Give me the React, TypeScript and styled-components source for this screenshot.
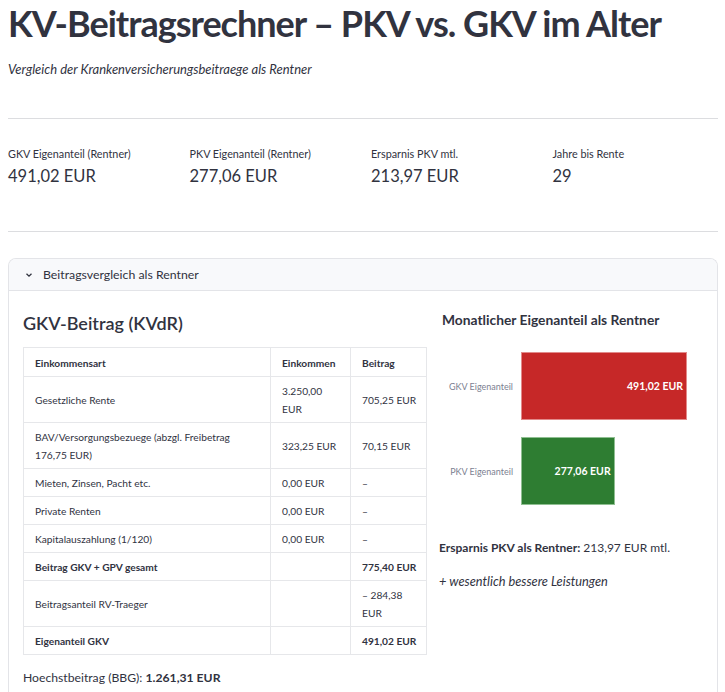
import styled, { createGlobalStyle } from 'styled-components';

const FONT = `"Lato", "Noto Sans", sans-serif`;

const GlobalStyle = createGlobalStyle`
	body {
		margin: 0;
		background: #ffffff;
		color: #31333f;
		font-family: ${FONT};
	}
`;

const metrics = [
	{ label: 'GKV Eigenanteil (Rentner)', value: '491,02 EUR' },
	{ label: 'PKV Eigenanteil (Rentner)', value: '277,06 EUR' },
	{ label: 'Ersparnis PKV mtl.', value: '213,97 EUR' },
	{ label: 'Jahre bis Rente', value: '29' },
];

type Row = { art: string; einkommen: string; beitrag: string; bold?: boolean; wrap?: boolean };

const rows: Row[] = [
	{ art: 'Gesetzliche Rente', einkommen: '3.250,00 EUR', beitrag: '705,25 EUR' },
	{ art: 'BAV/Versorgungsbezuege (abzgl. Freibetrag 176,75 EUR)', einkommen: '323,25 EUR', beitrag: '70,15 EUR' },
	{ art: 'Mieten, Zinsen, Pacht etc.', einkommen: '0,00 EUR', beitrag: '–' },
	{ art: 'Private Renten', einkommen: '0,00 EUR', beitrag: '–' },
	{ art: 'Kapitalauszahlung (1/120)', einkommen: '0,00 EUR', beitrag: '–' },
	{ art: 'Beitrag GKV + GPV gesamt', einkommen: '', beitrag: '775,40 EUR', bold: true },
	{ art: 'Beitragsanteil RV-Traeger', einkommen: '', beitrag: '– 284,38 EUR', wrap: true },
	{ art: 'Eigenanteil GKV', einkommen: '', beitrag: '491,02 EUR', bold: true },
];

const bars = [
	{ label: 'GKV Eigenanteil', value: 491.02, text: '491,02 EUR', color: '#c62828', stroke: '#e28a8a' },
	{ label: 'PKV Eigenanteil', value: 277.06, text: '277,06 EUR', color: '#2e7d32', stroke: '#8fbf91' },
];

const BAR_MAX = 166;

const App = () => {
	return (
		<Page>
			<GlobalStyle />
			<Title>KV-Beitragsrechner – PKV vs. GKV im Alter</Title>
			<Subtitle>Vergleich der Krankenversicherungsbeitraege als Rentner</Subtitle>
			<Divider />
			<Metrics>
				{metrics.map((m) => (
					<Metric key={m.label}>
						<p className="label">{m.label}</p>
						<p className="value">{m.value}</p>
					</Metric>
				))}
			</Metrics>
			<Divider />
			<Expander>
				<ExpanderHeader>
					<svg width="10" height="10" viewBox="0 0 10 10">
						<path d="M2.5 3.8 L5 6.2 L7.5 3.8" fill="none" stroke="#31333f" strokeWidth="1.3" />
					</svg>
					<span>Beitragsvergleich als Rentner</span>
				</ExpanderHeader>
				<ExpanderBody>
					<LeftCol>
						<SectionTitle>GKV-Beitrag (KVdR)</SectionTitle>
						<Table>
							<colgroup>
								<col style={{ width: 247 }} />
								<col style={{ width: 80 }} />
								<col style={{ width: 76 }} />
							</colgroup>
							<thead>
								<tr>
									<th>Einkommensart</th>
									<th>Einkommen</th>
									<th>Beitrag</th>
								</tr>
							</thead>
							<tbody>
								{rows.map((r) => (
									<BodyRow key={r.art} $bold={r.bold}>
										<td>{r.art}</td>
										<td>{r.einkommen}</td>
										<AmountCell $wrap={r.wrap}>{r.beitrag}</AmountCell>
									</BodyRow>
								))}
							</tbody>
						</Table>
						<MaxLine>
							Hoechstbeitrag (BBG): <b>1.261,31 EUR</b>
						</MaxLine>
					</LeftCol>
					<RightCol>
						<ChartTitle>Monatlicher Eigenanteil als Rentner</ChartTitle>
						<Chart>
							{bars.map((b) => (
								<BarRow key={b.label}>
									<BarLabel>{b.label}</BarLabel>
									<Bar
										$color={b.color}
										$stroke={b.stroke}
										style={{ width: (b.value / bars[0].value) * BAR_MAX }}
									>
										{b.text}
									</Bar>
								</BarRow>
							))}
						</Chart>
						<Savings>
							<b>Ersparnis PKV als Rentner:</b> 213,97 EUR mtl.
						</Savings>
						<Benefit>+ wesentlich bessere Leistungen</Benefit>
					</RightCol>
				</ExpanderBody>
			</Expander>
		</Page>
	);
};

const Page = styled.div`
	padding: 0 7px 0 8px;
`;

const Title = styled.h1`
	margin: 0;
	padding-top: 0;
	font-size: 36px;
	line-height: 46px;
	font-weight: 700;
	color: #31333f;
	letter-spacing: -1px;
	white-space: nowrap;
`;

const Subtitle = styled.p`
	margin: 14px 0 0;
	font-size: 13px;
	line-height: 18px;
	font-style: italic;
	color: #31333f;
`;

const Divider = styled.hr`
	margin: 40px 0 0;
	border: none;
	border-top: 1px solid #dcdde0;
`;

const Metrics = styled.div`
	display: grid;
	grid-template-columns: repeat(4, 1fr);
	gap: 16px;
	padding: 27px 0 44px;

	& + ${Divider} {
		margin-top: 0;
	}
`;

const Metric = styled.div`
	.label {
		margin: 0;
		font-size: 10.8px;
		line-height: 16px;
		color: #31333f;
	}
	.value {
		margin: 3px 0 0;
		font-size: 16.5px;
		line-height: 22px;
		color: #31333f;
	}
`;

const Expander = styled.div`
	margin-top: 26px;
	border: 1px solid #e3e4e8;
	border-bottom: none;
	border-radius: 8px 8px 0 0;
	height: 440px;
	overflow: hidden;
`;

const ExpanderHeader = styled.div`
	display: flex;
	align-items: center;
	gap: 9px;
	height: 31px;
	padding: 0 15px;
	background: #f8f9fb;
	border-bottom: 1px solid #e3e4e8;
	font-size: 12.3px;
	color: #31333f;
`;

const ExpanderBody = styled.div`
	display: flex;
	gap: 13px;
	padding: 0 14px;
`;

const LeftCol = styled.div`
	width: 403px;
	flex-shrink: 0;
`;

const RightCol = styled.div`
	flex: 1;
`;

const SectionTitle = styled.h2`
	margin: 20px 0 0;
	font-size: 18px;
	line-height: 24px;
	font-weight: 600;
	color: #31333f;
`;

const Table = styled.table`
	margin-top: 12px;
	width: 403px;
	border-collapse: collapse;
	table-layout: fixed;
	font-size: 10.2px;
	line-height: 18px;
	color: #31333f;

	th,
	td {
		border: 1px solid #e6e7ea;
		padding: 5px 10px 4px 11px;
		text-align: left;
		vertical-align: middle;
	}
	th {
		font-weight: 700;
		height: 19px;
	}
`;

const BodyRow = styled.tr<{ $bold?: boolean }>`
	td {
		font-weight: ${(p) => (p.$bold ? 700 : 400)};
	}
`;

const AmountCell = styled.td<{ $wrap?: boolean }>`
	white-space: ${(p) => (p.$wrap ? 'normal' : 'nowrap')};
`;

const MaxLine = styled.p`
	margin: 14px 0 0;
	font-size: 12.2px;
	line-height: 18px;
	color: #31333f;

	b {
		font-weight: 700;
	}
`;

const ChartTitle = styled.h3`
	margin: 20px 0 0 3px;
	font-size: 13.8px;
	line-height: 18px;
	font-weight: 700;
	color: #31333f;
`;

const Chart = styled.div`
	display: flex;
	flex-direction: column;
	gap: 17px;
	margin-top: 23px;
`;

const BarRow = styled.div`
	display: flex;
	align-items: center;
	gap: 8px;
`;

const BarLabel = styled.span`
	width: 74px;
	text-align: right;
	font-size: 9px;
	color: #7d8191;
	white-space: nowrap;
`;

const Bar = styled.div<{ $color: string; $stroke: string }>`
	height: 68px;
	box-sizing: border-box;
	background: ${(p) => p.$color};
	border: 1px solid ${(p) => p.$stroke};
	display: flex;
	align-items: center;
	justify-content: flex-end;
	padding-right: 3px;
	font-size: 10.5px;
	font-weight: 700;
	color: #ffffff;
	white-space: nowrap;
`;

const Savings = styled.p`
	margin: 34px 0 0;
	font-size: 12px;
	line-height: 18px;
	color: #31333f;
`;

const Benefit = styled.p`
	margin: 15px 0 0;
	font-size: 12.8px;
	line-height: 18px;
	font-style: italic;
	color: #31333f;
`;

export default App;
